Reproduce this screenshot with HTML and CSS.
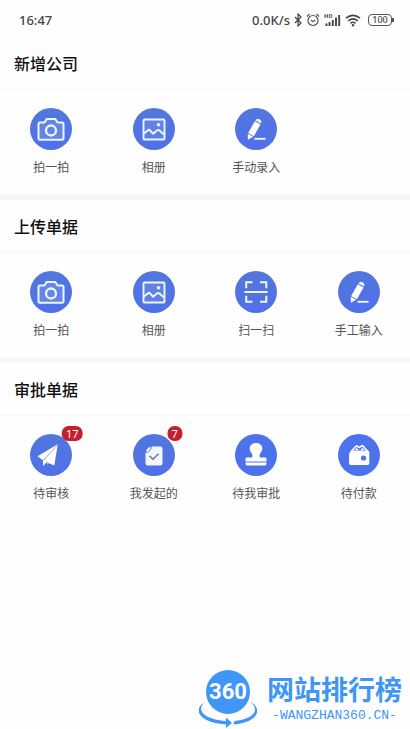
FILE: index.html
```html
<!DOCTYPE html>
<html lang="zh-CN">
<head>
<meta charset="utf-8">
<meta name="viewport" content="width=device-width, initial-scale=1">
<title>单据</title>
<link rel="stylesheet" href="styles.css">
</head>
<body>
<svg class="defs" aria-hidden="true">
  <defs>
    <linearGradient id="blue" x1="0" y1="0" x2="0" y2="1">
      <stop offset="0" stop-color="#5277dc"/>
      <stop offset="1" stop-color="#5070ea"/>
    </linearGradient>
    <symbol id="camera" viewBox="0 0 42 42">
      <circle cx="21" cy="21" r="21" fill="url(#blue)"/>
      <path d="M10 14.500h4.500l2.300-3.600h8.400l2.300 3.600H32q1.500 0 1.500 1.500v14.300q0 1.500-1.500 1.500H10q-1.500 0-1.500-1.500V16q0-1.500 1.500-1.500z" fill="#fff" fill-opacity=".12" stroke="#eaf7ff" stroke-width="2" stroke-linejoin="round"/>
      <circle cx="21" cy="22.500" r="5" fill="none" stroke="#eaf7ff" stroke-width="2.300"/>
    </symbol>
    <symbol id="album" viewBox="0 0 42 42">
      <circle cx="21" cy="21" r="21" fill="url(#blue)"/>
      <rect x="10.500" y="11.500" width="21" height="20" rx="1" fill="#fff" fill-opacity=".1" stroke="#eaf7ff" stroke-width="1.900"/>
      <circle cx="25.500" cy="16.800" r="1.800" fill="#eaf7ff"/>
      <path d="M11 25.500l4-3.300q1-.7 2 .2l3 3.300 4-3.300q1.200-.8 2.400 0l4.600 4" fill="none" stroke="#eaf7ff" stroke-width="2" stroke-linejoin="round"/>
    </symbol>
    <symbol id="pencil" viewBox="0 0 42 42">
      <circle cx="21" cy="21" r="21" fill="url(#blue)"/>
      <path d="M19.800 13.300l5.700 3.200-6.600 11.700-5.700-3.200z" fill="#fff"/>
      <path d="M20.300 12.400q1.700-2.600 4.300-1.200 2.600 1.500 1.400 4.400z" fill="#eaf2ff"/>
      <path d="M12.800 25.800l5.300 3-5.200 3z" fill="#fff"/>
      <path d="M19.500 30.800h11" stroke="#eaf7ff" stroke-width="1.900"/>
    </symbol>
    <symbol id="scan" viewBox="0 0 42 42">
      <circle cx="21" cy="21" r="21" fill="url(#blue)"/>
      <path d="M17.500 11.200h-6.300v6M25 11.200h6.300v6M17.500 30.800h-6.300v-6M25 30.800h6.300v-6M9.500 21h23" fill="none" stroke="#eaf7ff" stroke-width="2"/>
    </symbol>
    <symbol id="plane" viewBox="0 0 42 42">
      <circle cx="21" cy="21" r="21" fill="url(#blue)"/>
      <path d="M27.800 10.200L7.500 22.300l5.300 4zM27.800 10.200L13 26.600v5.400l3.700-3.700 7.600 3.200z" fill="#fff"/>
      <path d="M27.500 11L13.300 26.700" stroke="#a1a8ba" stroke-width=".8"/>
      <path d="M17 28.300l2 .9-2 1.600z" fill="#a7b4db"/>
    </symbol>
    <symbol id="doc" viewBox="0 0 42 42">
      <circle cx="21" cy="21" r="21" fill="url(#blue)"/>
      <path d="M19 12.500h8q2.500 0 2.500 2.500v14q0 2.500-2.500 2.500H15q-2.500 0-2.500-2.500v-9.800z" fill="#f4f7ff"/>
      <path d="M13 18.300q.4-4.500 5-5.500-.2 4.800-5 5.500z" fill="#f4f7ff"/>
      <path d="M13 18.600q4.800-.8 5.300-5.800" fill="none" stroke="#7082bd" stroke-width="1"/>
      <path d="M16.500 21.800l3.400 3.400 5.600-5.400" fill="none" stroke="#6573a0" stroke-width="1.400"/>
    </symbol>
    <symbol id="stamp" viewBox="0 0 42 42">
      <circle cx="21" cy="21" r="21" fill="#4d73ec"/>
      <path d="M21 9c4 0 6.300 2.600 6.300 5.800 0 3-2.800 4.400-2.800 7.200 0 1 .7 1.500 2 1.500h3.500q1.500 0 1.500 1.500v2.500h-21V25q0-1.500 1.500-1.500h3.500c1.300 0 2-.5 2-1.500 0-2.800-2.800-4.200-2.800-7.200C14.700 11.600 17 9 21 9z" fill="#fff"/>
      <path d="M10.500 28.600h21v1.200q0 1.700-1.700 1.700H12.200q-1.700 0-1.700-1.700z" fill="#fff"/>
    </symbol>
    <symbol id="wallet" viewBox="0 0 42 42">
      <circle cx="21" cy="21" r="21" fill="#4d73ec"/>
      <path d="M13.500 17l5-5.300 2.500 2 3.500-2.200 5 5.500" fill="none" stroke="#fff" stroke-width="1.500" stroke-linejoin="round"/>
      <path d="M16.500 16l2-2 2 2zM22.500 16l2-2.200 2.200 2.200z" fill="#fff"/>
      <path d="M13 16.500h16.500q1.800 0 1.800 1.800v10.900q0 1.800-1.800 1.800H12.800Q11 31 11 29.200V20z" fill="#fff"/>
      <circle cx="25.500" cy="24" r="2.600" fill="#4d73ec"/>
    </symbol>
  </defs>
</svg>

<header class="status">
  <span>16:47</span>
  <div class="status-right">
    <span>0.0K/s</span>
    <svg class="i-bt" viewBox="0 0 8 14"><path d="M1 4l6 6-3 3V1l3 3-6 6" fill="none" stroke="#444" stroke-width="1.200"/></svg>
    <svg class="i-alarm" viewBox="0 0 14 14"><circle cx="7" cy="7.500" r="5" fill="none" stroke="#555" stroke-width="1.200"/><path d="M1 3.500L3.500 1M13 3.500L10.500 1M4.800 7l2.200 1.700L9.200 7" fill="none" stroke="#555" stroke-width="1.200"/></svg>
    <svg class="i-signal" viewBox="0 0 17 14"><path d="M1 1v4M3.700 1v4M1 3h2.700M5.600 1.500v3h1q1.400 0 1.400-1.500T6.600 1.500z" fill="none" stroke="#444" stroke-width=".9"/><path d="M2.500 10.500V13M5.500 9v4M8.800 7v6M12 4.500V13M15.200 2v11" stroke="#444" stroke-width="1.900"/></svg>
    <svg class="i-wifi" viewBox="0 0 16 14"><path d="M1 5.200q7-5.800 14 0M3.200 7.800q4.800-4 9.600 0M5.500 10.300q2.500-2 5 0" fill="none" stroke="#444" stroke-width="1.600"/><circle cx="8" cy="12.200" r="1.200" fill="#444"/></svg>
    <span class="battery">100</span>
  </div>
</header>

<main>
  <section class="group">
    <h2>新增公司</h2>
    <div class="grid">
      <button type="button"><span class="pic"><svg><use href="#camera"/></svg></span>拍一拍</button>
      <button type="button"><span class="pic"><svg><use href="#album"/></svg></span>相册</button>
      <button type="button"><span class="pic"><svg><use href="#pencil"/></svg></span>手动录入</button>
    </div>
  </section>
  <section class="group">
    <h2>上传单据</h2>
    <div class="grid">
      <button type="button"><span class="pic"><svg><use href="#camera"/></svg></span>拍一拍</button>
      <button type="button"><span class="pic"><svg><use href="#album"/></svg></span>相册</button>
      <button type="button"><span class="pic"><svg><use href="#scan"/></svg></span>扫一扫</button>
      <button type="button"><span class="pic"><svg><use href="#pencil"/></svg></span>手工输入</button>
    </div>
  </section>
  <section class="group">
    <h2>审批单据</h2>
    <div class="grid">
      <button type="button"><span class="pic"><svg><use href="#plane"/></svg><span class="badge">17</span></span>待审核</button>
      <button type="button"><span class="pic"><svg><use href="#doc"/></svg><span class="badge">7</span></span>我发起的</button>
      <button type="button"><span class="pic"><svg><use href="#stamp"/></svg></span>待我审批</button>
      <button type="button"><span class="pic"><svg><use href="#wallet"/></svg></span>待付款</button>
    </div>
  </section>
</main>

<footer class="brand">
  <div class="mark">
    <svg viewBox="0 0 58 60">
      <circle cx="29" cy="23" r="22" fill="#3f96f7"/>
      <path d="M6.500 33C-2 38 .5 50 27 52V48.500l6 5.500-6 5V55.500C-2 53.500-6.500 39 6.500 33zM51.500 33c13 7 7 20.500-17 22.500l1-3.500C58.500 49 59.500 39 51.500 33z" fill="#3f96f7"/>
    </svg>
    <span>360</span>
  </div>
  <div class="brand-text">
    <strong>网站排行榜</strong>
    <small>-WANGZHAN360.CN-</small>
  </div>
</footer>
</body>
</html>
```
FILE: styles.css
```css
* {
  box-sizing: border-box;
}

body {
  margin: 0;
  min-height: 100vh;
  display: flex;
  flex-direction: column;
  background: #fefefe;
  color: #555;
  font-family: "Noto Sans", "Noto Sans CJK SC", sans-serif;
}

svg {
  display: block;
}

.defs {
  position: absolute;
  width: 0;
  height: 0;
}

.status {
  display: flex;
  align-items: center;
  justify-content: space-between;
  height: 37px;
  padding: 3px 16px 0 19px;
  color: #444;
  font-size: 13px;
  font-weight: 500;
}

.status-right {
  display: flex;
  align-items: center;
  gap: 4px;
}

.i-bt {
  width: 8px;
  height: 14px;
}

.i-alarm,
.i-wifi {
  width: 14px;
  height: 14px;
}

.i-wifi {
  width: 16px;
}

.i-signal {
  width: 17px;
  height: 14px;
}

.battery {
  position: relative;
  width: 24px;
  margin: 0 2px 0 3px;
  border: 1px solid #555;
  border-radius: 4px;
  font-size: 9px;
  line-height: 10px;
  text-align: center;
}

.battery::after {
  content: "";
  position: absolute;
  top: 3px;
  right: -3px;
  width: 2px;
  height: 4px;
  background: #555;
}

.group + .group {
  border-top: 6px solid #f6f6f6;
}

h2 {
  margin: 0;
  padding: 14px;
  border-bottom: 1px solid #f7f7f7;
  color: #111;
  font-family: "Noto Sans CJK SC", sans-serif;
  font-size: 16px;
  font-weight: 500;
  line-height: 24px;
}

.grid {
  display: grid;
  grid-template-columns: repeat(4, 1fr);
  padding: 18px 0;
}

.grid button {
  display: flex;
  flex-direction: column;
  align-items: center;
  gap: 8px;
  padding: 0;
  border: 0;
  background: none;
  color: #555;
  font-family: "Noto Sans CJK SC", sans-serif;
  font-size: 12px;
  line-height: 18px;
}

.pic {
  position: relative;
}

.pic svg {
  width: 42px;
  height: 42px;
}

.badge {
  position: absolute;
  top: -8px;
  left: 100%;
  transform: translateX(-50%);
  min-width: 15px;
  padding: 0 4px;
  border-radius: 7px;
  background: #c4202f;
  color: #fff;
  font-family: "Noto Sans", sans-serif;
  font-size: 11px;
  line-height: 15px;
}

.brand {
  display: flex;
  align-items: flex-start;
  align-self: flex-end;
  gap: 10px;
  margin-top: auto;
  padding-right: 8px;
  color: #3f96f7;
}

.mark {
  position: relative;
  width: 58px;
}

.mark span {
  position: absolute;
  inset: 0 0 auto;
  color: #fff;
  font-family: "Liberation Sans Narrow", "Roboto", sans-serif;
  font-size: 22px;
  font-weight: 700;
  line-height: 46px;
  text-align: center;
}

.brand-text {
  display: flex;
  flex-direction: column;
  align-items: center;
}

.brand strong {
  font-family: "Noto Sans CJK SC", sans-serif;
  font-size: 27px;
  font-weight: 700;
  line-height: 40px;
}

.brand small {
  font-family: "Liberation Mono", monospace;
  font-size: 13px;
  line-height: 14px;
}
```
